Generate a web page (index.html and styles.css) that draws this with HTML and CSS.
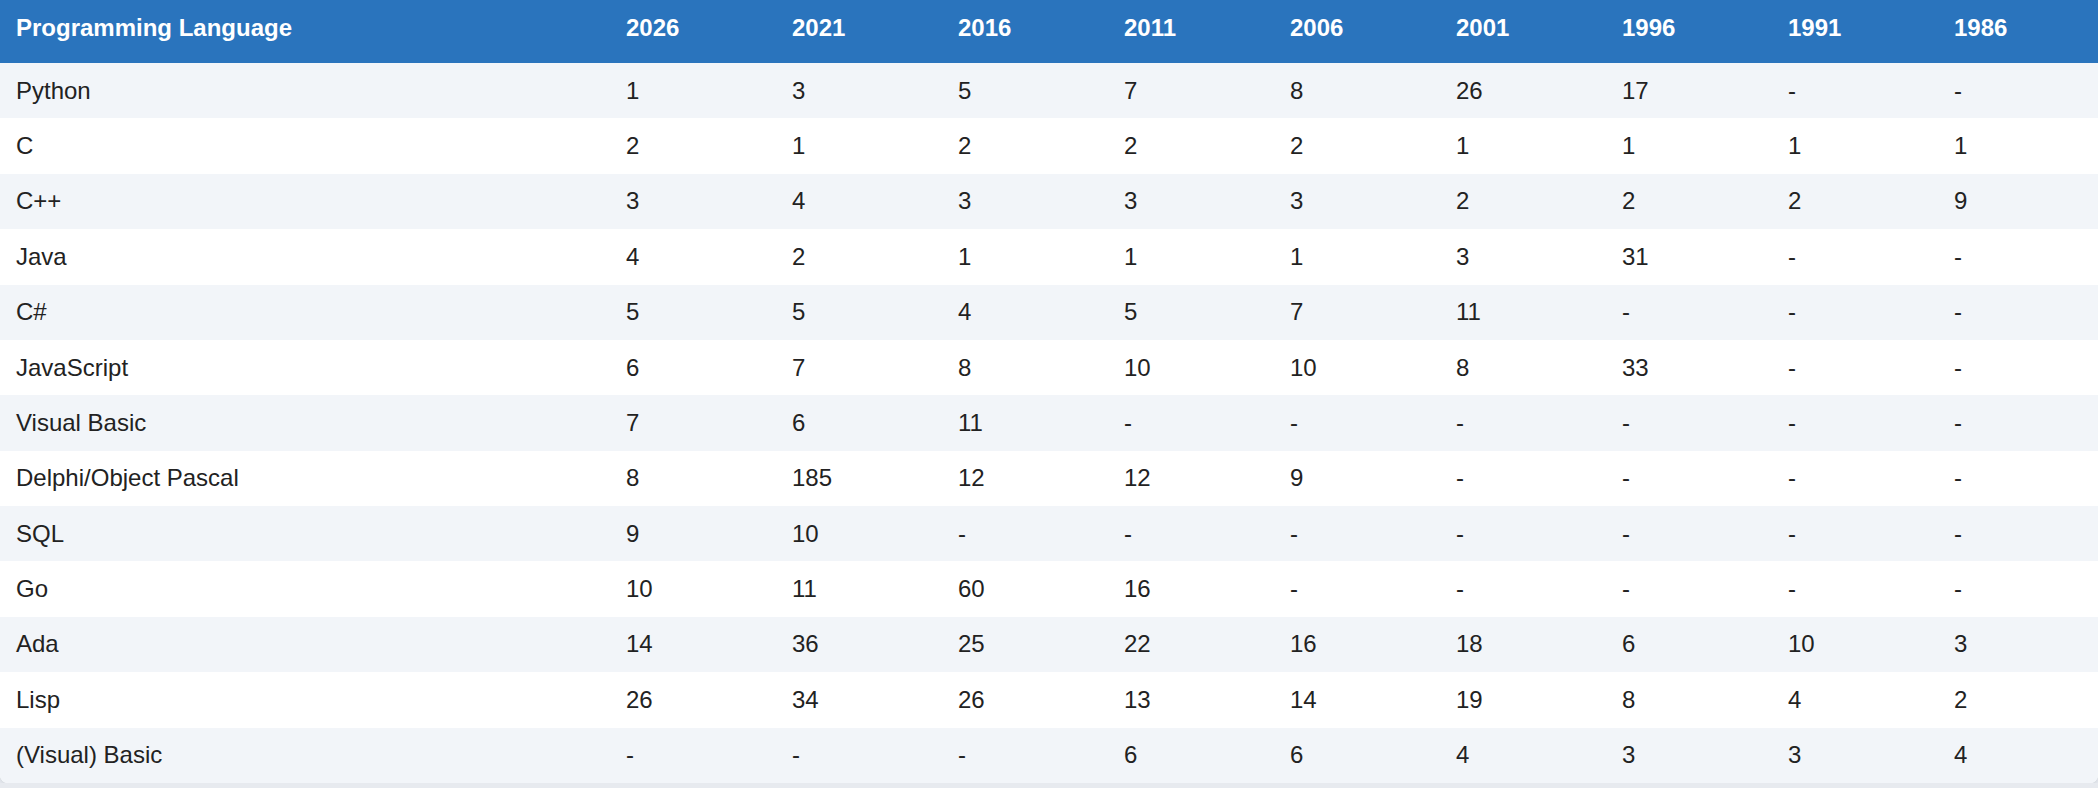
FILE: index.html
```html
<!DOCTYPE html>
<html lang="en">
<head>
<meta charset="utf-8">
<title>Programming Language Rankings</title>
<link rel="stylesheet" href="styles.css">
</head>
<body>
<div class="table-wrap">
<table class="rank-table">
<colgroup>
<col class="col-lang">
<col class="col-year"><col class="col-year"><col class="col-year"><col class="col-year"><col class="col-year"><col class="col-year"><col class="col-year"><col class="col-year"><col class="col-year">
</colgroup>
<thead>
<tr><th>Programming Language</th><th>2026</th><th>2021</th><th>2016</th><th>2011</th><th>2006</th><th>2001</th><th>1996</th><th>1991</th><th>1986</th></tr>
</thead>
<tbody>
<tr><td>Python</td><td>1</td><td>3</td><td>5</td><td>7</td><td>8</td><td>26</td><td>17</td><td>-</td><td>-</td></tr>
<tr><td>C</td><td>2</td><td>1</td><td>2</td><td>2</td><td>2</td><td>1</td><td>1</td><td>1</td><td>1</td></tr>
<tr><td>C++</td><td>3</td><td>4</td><td>3</td><td>3</td><td>3</td><td>2</td><td>2</td><td>2</td><td>9</td></tr>
<tr><td>Java</td><td>4</td><td>2</td><td>1</td><td>1</td><td>1</td><td>3</td><td>31</td><td>-</td><td>-</td></tr>
<tr><td>C#</td><td>5</td><td>5</td><td>4</td><td>5</td><td>7</td><td>11</td><td>-</td><td>-</td><td>-</td></tr>
<tr><td>JavaScript</td><td>6</td><td>7</td><td>8</td><td>10</td><td>10</td><td>8</td><td>33</td><td>-</td><td>-</td></tr>
<tr><td>Visual Basic</td><td>7</td><td>6</td><td>11</td><td>-</td><td>-</td><td>-</td><td>-</td><td>-</td><td>-</td></tr>
<tr><td>Delphi/Object Pascal</td><td>8</td><td>185</td><td>12</td><td>12</td><td>9</td><td>-</td><td>-</td><td>-</td><td>-</td></tr>
<tr><td>SQL</td><td>9</td><td>10</td><td>-</td><td>-</td><td>-</td><td>-</td><td>-</td><td>-</td><td>-</td></tr>
<tr><td>Go</td><td>10</td><td>11</td><td>60</td><td>16</td><td>-</td><td>-</td><td>-</td><td>-</td><td>-</td></tr>
<tr><td>Ada</td><td>14</td><td>36</td><td>25</td><td>22</td><td>16</td><td>18</td><td>6</td><td>10</td><td>3</td></tr>
<tr><td>Lisp</td><td>26</td><td>34</td><td>26</td><td>13</td><td>14</td><td>19</td><td>8</td><td>4</td><td>2</td></tr>
<tr><td>(Visual) Basic</td><td>-</td><td>-</td><td>-</td><td>6</td><td>6</td><td>4</td><td>3</td><td>3</td><td>4</td></tr>
</tbody>
</table>
</div>
</body>
</html>
```
FILE: styles.css
```css
html, body {
  margin: 0;
  padding: 0;
}
body {
  background: #e7eaef;
  font-family: "Liberation Sans", Arial, sans-serif;
  font-size: 24px;
  color: #222;
  overflow: hidden;
}
.table-wrap {
  width: 100%;
  overflow: hidden;
  background: #fff;
  border-radius: 0 0 8px 8px;
  box-shadow: 0 1px 4px rgba(30, 50, 80, 0.12);
}
.rank-table {
  width: 2104px;
  border-collapse: collapse;
  table-layout: fixed;
}
.col-lang { width: 610px; }
.col-year { width: 166px; }
.rank-table th {
  background: #2a74bd;
  color: #fff;
  font-weight: bold;
  text-align: left;
  height: 63px;
  padding: 0 16px 7px;
  box-sizing: border-box;
  vertical-align: middle;
  line-height: 28px;
}
.rank-table td {
  text-align: left;
  padding: 0 16px;
  height: 55.38px;
  box-sizing: border-box;
  vertical-align: middle;
  line-height: 28px;
}
.rank-table tbody tr:nth-child(odd) { background: #f2f5f9; }
.rank-table tbody tr:nth-child(even) { background: #fff; }
```
